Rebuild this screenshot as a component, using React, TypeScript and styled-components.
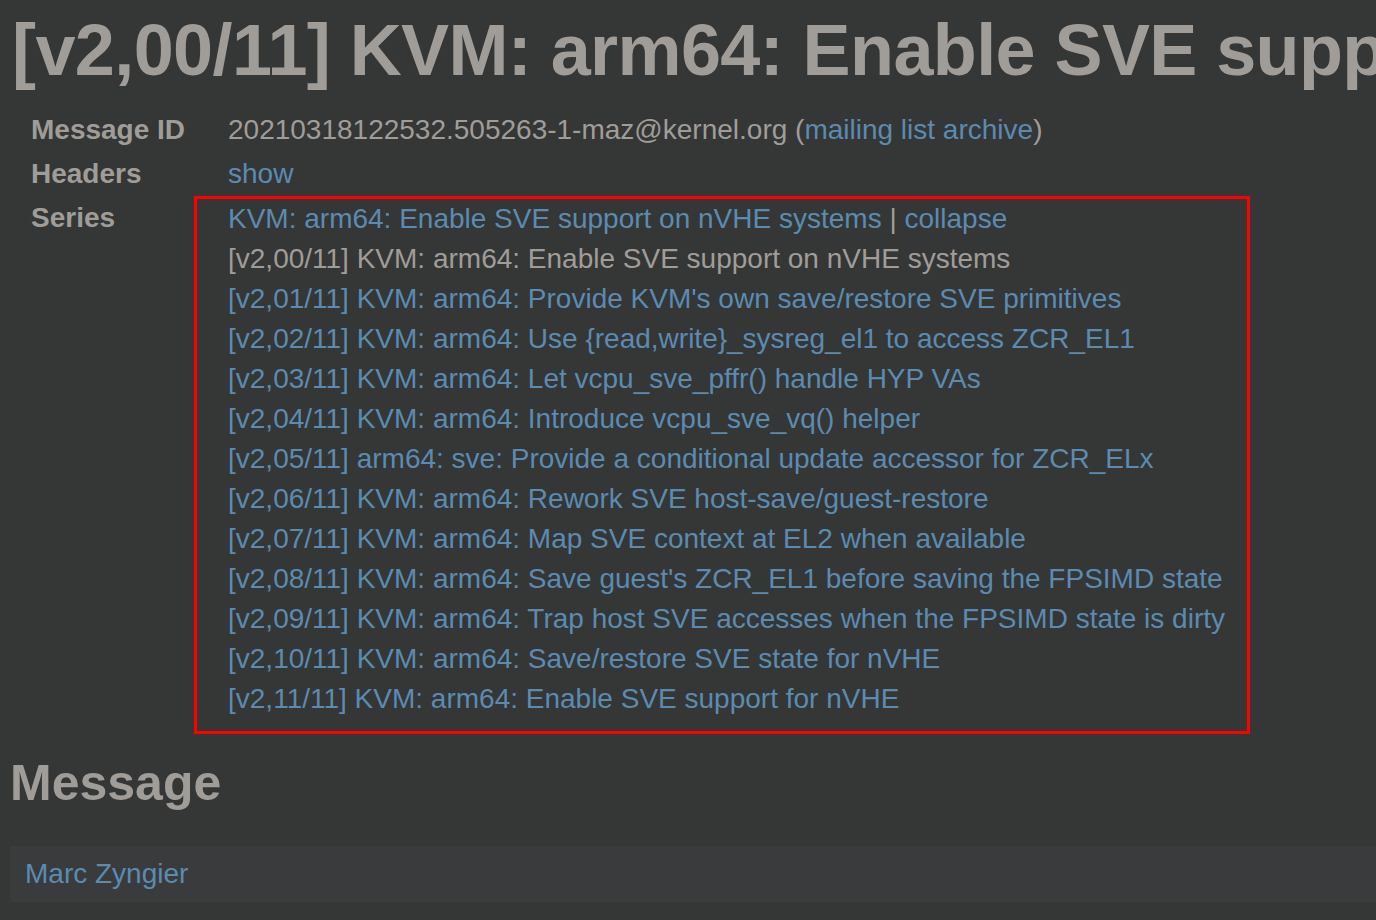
import React from "react";
import styled, { createGlobalStyle } from "styled-components";

const Global = createGlobalStyle`
  html, body { margin: 0; padding: 0; background: #353636; }
  body { font-family: "Liberation Sans", Arial, Helvetica, sans-serif; color: #a09d99; overflow: hidden; }
`;

const Page = styled.div`
  width: 1376px;
  height: 920px;
  overflow: hidden;
  padding: 10px 0 0 10px;
  box-sizing: border-box;
`;

const Title = styled.h1`
  margin: 0;
  padding: 0 0 0 2px;
  font-size: 72px;
  line-height: 80px;
  letter-spacing: -0.6px;
  font-weight: 700;
  white-space: nowrap;
  color: #a09d99;
`;

const Meta = styled.div`
  display: grid;
  grid-template-columns: 163px auto;
  align-items: start;
  margin: 18px 0 0 21px;
  font-size: 28px;
`;

const Label = styled.div`
  font-weight: 700;
  line-height: 44px;
  white-space: nowrap;
`;

const Value = styled.div`
  line-height: 44px;
  padding-left: 34px;
  white-space: nowrap;
`;

const Link = styled.a`
  color: #5b8bb1;
  text-decoration: none;
`;

const SeriesBox = styled.div`
  border: 3px solid #ff0000;
  width: 1056px;
  padding: 0 0 12px 31px;
  box-sizing: border-box;
`;

const SeriesRow = styled.div<{ $current?: boolean }>`
  line-height: 40px;
  white-space: nowrap;
  color: ${(p) => (p.$current ? "#a09d99" : "#5b8bb1")};
`;

const Sep = styled.span`
  color: #a09d99;
`;

const H2 = styled.h2`
  margin: 16px 0 0 0;
  font-size: 50px;
  line-height: 66px;
  font-weight: 700;
`;

const Msg = styled.div`
  margin-top: 30px;
  background: #3a3b3d;
  height: 56px;
  padding-left: 15px;
  font-size: 28px;
  line-height: 56px;
`;

const patches = [
  "[v2,01/11] KVM: arm64: Provide KVM's own save/restore SVE primitives",
  "[v2,02/11] KVM: arm64: Use {read,write}_sysreg_el1 to access ZCR_EL1",
  "[v2,03/11] KVM: arm64: Let vcpu_sve_pffr() handle HYP VAs",
  "[v2,04/11] KVM: arm64: Introduce vcpu_sve_vq() helper",
  "[v2,05/11] arm64: sve: Provide a conditional update accessor for ZCR_ELx",
  "[v2,06/11] KVM: arm64: Rework SVE host-save/guest-restore",
  "[v2,07/11] KVM: arm64: Map SVE context at EL2 when available",
  "[v2,08/11] KVM: arm64: Save guest's ZCR_EL1 before saving the FPSIMD state",
  "[v2,09/11] KVM: arm64: Trap host SVE accesses when the FPSIMD state is dirty",
  "[v2,10/11] KVM: arm64: Save/restore SVE state for nVHE",
  "[v2,11/11] KVM: arm64: Enable SVE support for nVHE",
];

export default function App() {
  return (
    <Page>
      <Global />
      <Title>[v2,00/11] KVM: arm64: Enable SVE support on nVHE systems</Title>
      <Meta>
        <Label>Message ID</Label>
        <Value>
          20210318122532.505263-1-maz@kernel.org (<Link href="#">mailing list archive</Link>)
        </Value>
        <Label>Headers</Label>
        <Value>
          <Link href="#">show</Link>
        </Value>
        <Label>Series</Label>
        <SeriesBox>
          <SeriesRow>
            KVM: arm64: Enable SVE support on nVHE systems <Sep>|</Sep> collapse
          </SeriesRow>
          <SeriesRow $current>[v2,00/11] KVM: arm64: Enable SVE support on nVHE systems</SeriesRow>
          {patches.map((p) => (
            <SeriesRow key={p}>{p}</SeriesRow>
          ))}
        </SeriesBox>
      </Meta>
      <H2>Message</H2>
      <Msg>
        <Link href="#">Marc Zyngier</Link>
      </Msg>
    </Page>
  );
}
